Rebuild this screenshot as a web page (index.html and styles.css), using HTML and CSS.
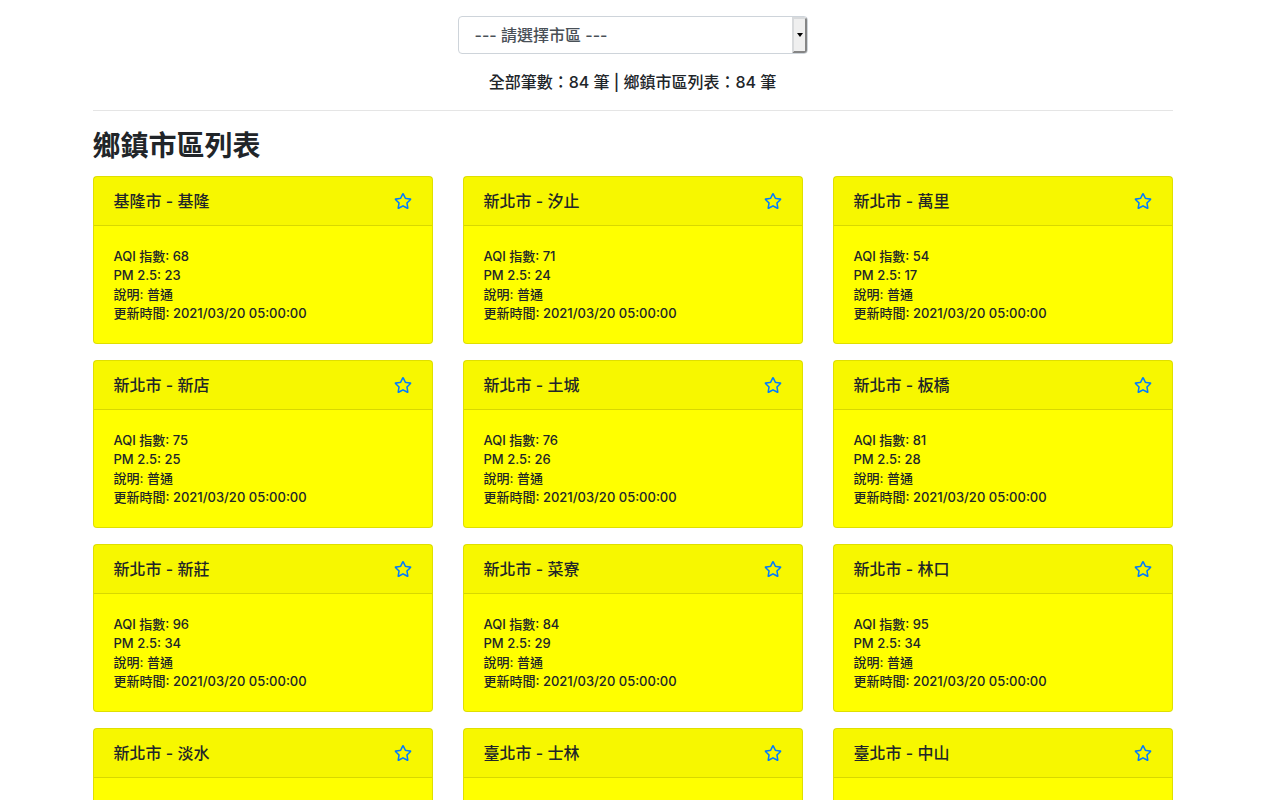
FILE: index.html
```html
<!DOCTYPE html>
<html lang="zh-Hant">
<head>
<meta charset="utf-8">
<title>鄉鎮市區列表</title>
<link rel="stylesheet" href="styles.css">
</head>
<body>
<main class="container">
  <div class="filter">
    <select class="filter-select" aria-label="請選擇市區">
      <option>--- 請選擇市區 ---</option>
    </select>
  </div>
  <p class="summary">全部筆數：84 筆 | 鄉鎮市區列表：84 筆</p>
  <hr class="divider">
  <h2 class="title">鄉鎮市區列表</h2>
  <div class="cards" id="cards"></div>
</main>
<template id="card">
  <article class="card">
    <header class="card-header">
      <span class="card-name"></span>
      <button class="star" type="button" aria-label="關注">
        <svg class="star-icon" viewBox="0 0 576 512" aria-hidden="true"><path fill="currentColor" d="M528.1 171.5L382 150.2 316.7 17.8c-11.7-23.6-45.6-23.9-57.4 0L194 150.2 47.9 171.5c-26.2 3.8-36.7 36.1-17.7 54.6l105.7 103-25 145.5c-4.5 26.3 23.2 46 46.4 33.7L288 439.6l130.7 68.7c23.2 12.2 50.9-7.4 46.4-33.7l-25-145.5 105.7-103c19-18.5 8.5-50.8-17.7-54.6zM388.6 312.3l23.7 138.4L288 385.4l-124.3 65.3 23.7-138.4-100.6-98 139-20.2 62.2-126 62.2 126 139 20.2-100.6 98z"/></svg>
      </button>
    </header>
    <div class="card-body"></div>
  </article>
</template>
<script src="app.js"></script>
</body>
</html>
```
FILE: styles.css
```css
*,
*::before,
*::after {
  box-sizing: border-box;
}

body {
  margin: 0;
  background: #fff;
  color: #212529;
  font-family: Inter, "Noto Sans CJK TC", sans-serif;
  font-size: 16px;
  font-weight: 500;
  line-height: 24px;
}

.container {
  max-width: 1110px;
  height: 100vh;
  overflow: hidden;
  margin: 0 auto;
  padding: 16px 15px 0;
}

.filter {
  position: relative;
  max-width: 350px;
  margin: 0 auto 16px;
}

.filter-select {
  display: block;
  width: 100%;
  height: 38px;
  padding: 6px 16px;
  appearance: none;
  border: 1px solid #ced4da;
  border-radius: 4px;
  background: #fff;
  color: #495057;
  font: inherit;
}

.filter::before {
  content: "";
  position: absolute;
  top: 1px;
  right: 1px;
  bottom: 1px;
  width: 15px;
  border: 2px solid;
  border-color: #d8dadc #858585 #858585 #d8dadc;
  border-radius: 0 3px 3px 0;
  background: #efefef;
  pointer-events: none;
}

.filter::after {
  content: "";
  position: absolute;
  top: 17px;
  right: 5px;
  border: 3px solid transparent;
  border-top: 4px solid #000;
  border-bottom: 0;
  pointer-events: none;
}

.summary {
  margin: 0 0 16px;
  text-align: center;
}

.divider {
  margin: 0 0 18px;
  border: 0;
  border-top: 1px solid #e5e5e5;
}

.title {
  margin: 0 0 13px;
  font-size: 28px;
  font-weight: 700;
  line-height: 34px;
}

.cards {
  display: grid;
  grid-template-columns: repeat(3, minmax(0, 1fr));
  gap: 16px 30px;
}

.card {
  border: 1px solid rgba(0, 0, 0, 0.125);
  border-radius: 4px;
  background: #ff0;
}

.card-header {
  display: flex;
  align-items: center;
  justify-content: space-between;
  padding: 12px 20px;
  border-bottom: 1px solid rgba(0, 0, 0, 0.125);
  background: rgba(0, 0, 0, 0.03);
}

.star {
  display: flex;
  padding: 0;
  border: 0;
  background: none;
  color: #007bff;
  cursor: pointer;
}

.star-icon {
  width: 18px;
  height: 16px;
}

.card-body {
  min-height: 117px;
  padding: 21px 20px 20px;
  font-size: 13px;
  line-height: 19px;
}
```
FILE: app.js
```js
const sites = [
  ["基隆市 - 基隆", 68, 23],
  ["新北市 - 汐止", 71, 24],
  ["新北市 - 萬里", 54, 17],
  ["新北市 - 新店", 75, 25],
  ["新北市 - 土城", 76, 26],
  ["新北市 - 板橋", 81, 28],
  ["新北市 - 新莊", 96, 34],
  ["新北市 - 菜寮", 84, 29],
  ["新北市 - 林口", 95, 34],
  ["新北市 - 淡水"],
  ["臺北市 - 士林"],
  ["臺北市 - 中山"]
];

const list = document.getElementById("cards");
const template = document.getElementById("card");

for (const [name, aqi, pm] of sites) {
  const card = template.content.cloneNode(true);
  card.querySelector(".card-name").textContent = name;
  if (aqi) {
    const lines = [
      `AQI 指數: ${aqi}`,
      `PM 2.5: ${pm}`,
      "說明: 普通",
      "更新時間: 2021/03/20 05:00:00"
    ];
    for (const line of lines) {
      const row = document.createElement("div");
      row.textContent = line;
      card.querySelector(".card-body").append(row);
    }
  }
  list.append(card);
}
```
